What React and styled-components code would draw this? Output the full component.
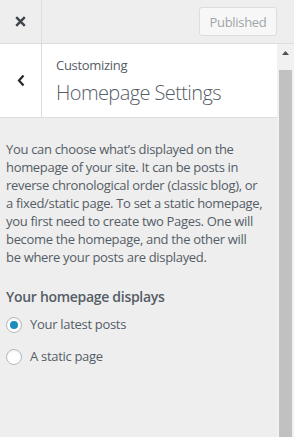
import React from "react";
import styled, { createGlobalStyle } from "styled-components";

const Global = createGlobalStyle`
  html, body { margin: 0; padding: 0; background: #eeeeee; }
  body { font-family: "Open Sans", "Noto Sans", sans-serif; color: #555d66; }
  * { box-sizing: border-box; }
`;

const Frame = styled.div`
  width: 294px;
  height: 437px;
  display: flex;
  flex-direction: column;
  background: #eeeeee;
  overflow: hidden;
`;

const TopBar = styled.div`
  height: 44px;
  flex: none;
  display: flex;
  align-items: center;
  border-bottom: 1px solid #dddddd;
  background: #eeeeee;
`;

const CloseButton = styled.div`
  width: 42px;
  height: 43px;
  display: flex;
  align-items: center;
  justify-content: center;
  border-right: 1px solid #dddddd;
  color: #444;
`;

const PublishButton = styled.div`
  margin-left: auto;
  margin-right: 17px;
  width: 78px;
  height: 29px;
  border: 1px solid #dddddd;
  border-radius: 3px;
  background: #f7f7f7;
  color: #a0a5aa;
  font-size: 13px;
  letter-spacing: -0.3px;
  display: flex;
  align-items: center;
  justify-content: center;
`;

const Body = styled.div`
  flex: 1;
  display: flex;
  min-height: 0;
`;

const Panel = styled.div`
  flex: 1;
  display: flex;
  flex-direction: column;
`;

const Header = styled.div`
  height: 74px;
  display: flex;
  background: #ffffff;
  border-bottom: 1px solid #dddddd;
`;

const BackButton = styled.div`
  width: 42px;
  display: flex;
  align-items: center;
  justify-content: center;
  border-right: 1px solid #dddddd;
  color: #23282d;
`;

const TitleBlock = styled.div`
  display: flex;
  flex-direction: column;
  padding: 12px 0 0 14px;
`;

const Small = styled.span`
  font-size: 13px;
  line-height: 18px;
  letter-spacing: -0.3px;
  color: #555d66;
`;

const Title = styled.span`
  font-size: 20px;
  font-weight: 300;
  line-height: 28px;
  margin-top: 5px;
  letter-spacing: -0.6px;
  color: #555d66;
`;

const Content = styled.div`
  padding: 22px 13.5px 0 6px;
`;

const Description = styled.p`
  margin: 0;
  font-size: 13px;
  line-height: 18px;
  letter-spacing: -0.32px;
  color: #555d66;
`;

const Heading = styled.div`
  margin-top: 21px;
  font-size: 14px;
  font-weight: 600;
  line-height: 20px;
  letter-spacing: -0.3px;
  color: #555d66;
`;

const Options = styled.div`
  display: flex;
  flex-direction: column;
  gap: 13px;
  margin-top: 8px;
`;

const Option = styled.label`
  display: flex;
  align-items: center;
  gap: 8px;
  font-size: 13px;
  line-height: 19px;
  letter-spacing: -0.3px;
  color: #555d66;
`;

const Radio = styled.span`
  width: 16px;
  height: 16px;
  border-radius: 50%;
  border: 1px solid #b4b9be;
  background: #fff;
  box-shadow: inset 0 1px 2px rgba(0, 0, 0, 0.07);
  display: flex;
  align-items: center;
  justify-content: center;
  &::after {
    content: "";
    width: 8px;
    height: 8px;
    border-radius: 50%;
    background: #1e8cbe;
    display: ${(p) => (p.$checked ? "block" : "none")};
  }
`;

const Scrollbar = styled.div`
  width: 17px;
  flex: none;
  background: #f1f1f1;
  display: flex;
  flex-direction: column;
  align-items: center;
`;

const ScrollArrow = styled.div`
  height: 17px;
  width: 17px;
  display: flex;
  align-items: center;
  justify-content: center;
`;

const Thumb = styled.div`
  margin-top: 9px;
  width: 13px;
  flex: 1;
  background: #c1c1c1;
`;

export default function App() {
  return (
    <>
      <Global />
      <Frame>
        <TopBar>
          <CloseButton>
            <svg width="11" height="11" viewBox="0 0 11 11">
              <path d="M1.2 1.2 L9.8 9.8 M9.8 1.2 L1.2 9.8" stroke="#3c434a" strokeWidth="2.4" />
            </svg>
          </CloseButton>
          <PublishButton>Published</PublishButton>
        </TopBar>
        <Body>
          <Panel>
            <Header>
              <BackButton>
                <svg width="8" height="13" viewBox="0 0 8 13">
                  <path d="M6.5 1.5 L2 6.5 L6.5 11.5" fill="none" stroke="#23282d" strokeWidth="2.2" />
                </svg>
              </BackButton>
              <TitleBlock>
                <Small>Customizing</Small>
                <Title>Homepage Settings</Title>
              </TitleBlock>
            </Header>
            <Content>
              <Description>
                You can choose what’s displayed on the homepage of your site. It can be posts in reverse
                chronological order (classic blog), or a fixed/static page. To set a static homepage, you
                first need to create two Pages. One will become the homepage, and the other will be where
                your posts are displayed.
              </Description>
              <Heading>Your homepage displays</Heading>
              <Options>
                <Option>
                  <Radio $checked />
                  Your latest posts
                </Option>
                <Option>
                  <Radio />
                  A static page
                </Option>
              </Options>
            </Content>
          </Panel>
          <Scrollbar>
            <ScrollArrow>
              <svg width="7" height="4" viewBox="0 0 7 4">
                <path d="M0 4 L3.5 0 L7 4 Z" fill="#505050" />
              </svg>
            </ScrollArrow>
            <Thumb />
          </Scrollbar>
        </Body>
      </Frame>
    </>
  );
}
